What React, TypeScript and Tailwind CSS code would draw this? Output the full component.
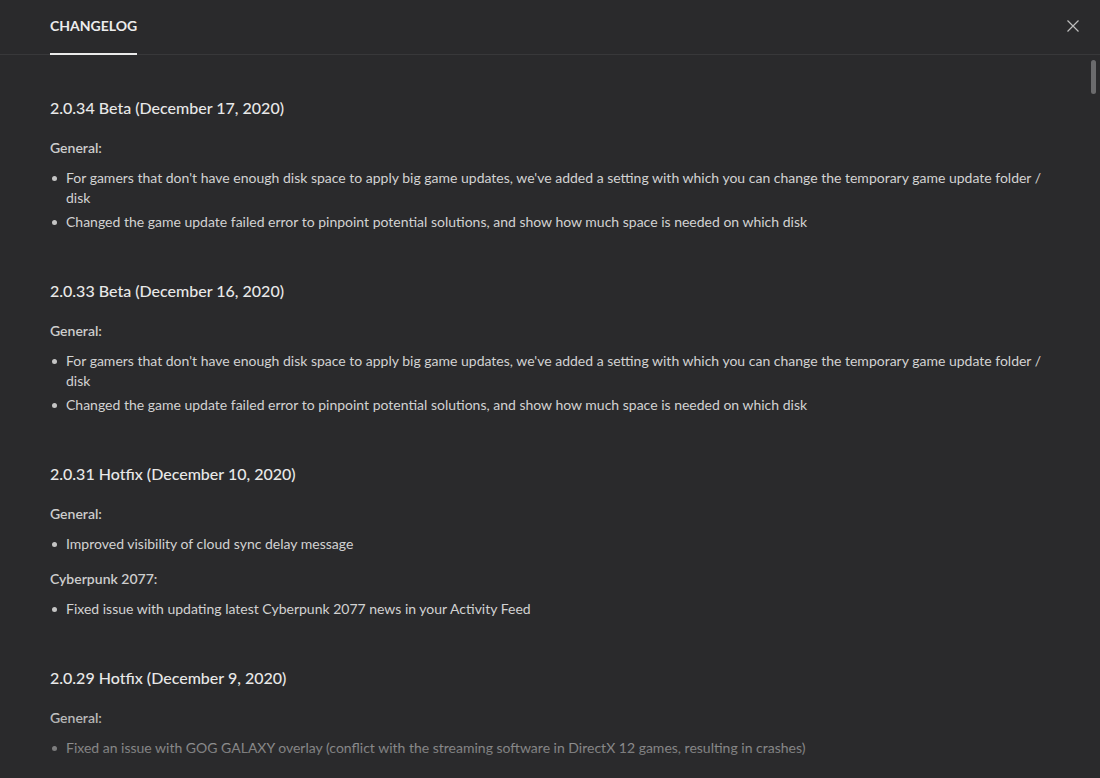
import React from 'react';

type Group = { title: string; items: string[] };
type Release = { version: string; groups: Group[] };

const RELEASES: Release[] = [
  {
    version: '2.0.34 Beta (December 17, 2020)',
    groups: [
      {
        title: 'General:',
        items: [
          "For gamers that don't have enough disk space to apply big game updates, we've added a setting with which you can change the temporary game update folder / disk",
          'Changed the game update failed error to pinpoint potential solutions, and show how much space is needed on which disk',
        ],
      },
    ],
  },
  {
    version: '2.0.33 Beta (December 16, 2020)',
    groups: [
      {
        title: 'General:',
        items: [
          "For gamers that don't have enough disk space to apply big game updates, we've added a setting with which you can change the temporary game update folder / disk",
          'Changed the game update failed error to pinpoint potential solutions, and show how much space is needed on which disk',
        ],
      },
    ],
  },
  {
    version: '2.0.31 Hotfix (December 10, 2020)',
    groups: [
      { title: 'General:', items: ['Improved visibility of cloud sync delay message'] },
      { title: 'Cyberpunk 2077:', items: ['Fixed issue with updating latest Cyberpunk 2077 news in your Activity Feed'] },
    ],
  },
  {
    version: '2.0.29 Hotfix (December 9, 2020)',
    groups: [
      {
        title: 'General:',
        items: [
          'Fixed an issue with GOG GALAXY overlay (conflict with the streaming software in DirectX 12 games, resulting in crashes)',
        ],
      },
    ],
  },
];

function ReleaseBlock({ release }: { release: Release }) {
  return (
    <section className="mb-[47px]">
      <h2 className="text-[16px] leading-6 font-medium text-[#e8e8e8]">{release.version}</h2>
      <div className="mt-[18px] flex flex-col gap-[15px]">
        {release.groups.map((g) => (
          <div key={g.title}>
            <div className="text-[14px] leading-5 font-semibold text-[#cdcdcd]">{g.title}</div>
            <ul className="mt-[10px] flex flex-col gap-1">
              {g.items.map((item, i) => (
                <li key={i} className="flex text-[14px] leading-5 text-[#d2d2d2]">
                  <span className="w-4 shrink-0 flex pt-[8px] pl-[2px]">
                    <span className="block w-[5px] h-[5px] rounded-full bg-[#c4c4c4]" />
                  </span>
                  <span>{item}</span>
                </li>
              ))}
            </ul>
          </div>
        ))}
      </div>
    </section>
  );
}

export default function App() {
  return (
    <div
      className="relative w-[1100px] h-[778px] overflow-hidden bg-[#2a2a2c] flex flex-col"
      style={{ fontFamily: 'Lato, "Noto Sans", sans-serif' }}
    >
      <header className="h-[55px] shrink-0 border-b border-[#38383a] flex items-end justify-between pl-[50px] pr-[20px]">
        <div className="flex flex-col items-start">
          <span className="text-[14px] font-bold text-[#ececec] leading-4 mb-[19px]">CHANGELOG</span>
          <span className="block h-[2px] w-[87px] bg-[#eaeaea] -mb-px" />
        </div>
        <button className="self-start mt-[19px] text-[#bdbdbd] bg-transparent border-0 p-0">
          <svg width="14" height="14" viewBox="0 0 14 14" fill="none" stroke="currentColor" strokeWidth="1.2">
            <path d="M1.5 1.5 L12.5 12.5 M12.5 1.5 L1.5 12.5" />
          </svg>
        </button>
      </header>

      <div className="flex-1 overflow-hidden pl-[50px] pr-[52px] pt-[41px]">
        {RELEASES.map((r) => (
          <ReleaseBlock key={r.version} release={r} />
        ))}
      </div>

      <div className="absolute right-[4px] top-[60px] w-[5px] h-[34px] rounded-full bg-[#6b6b6d]" />
      <div className="absolute left-0 right-0 bottom-0 h-[70px] bg-gradient-to-b from-[#2a2a2c]/0 to-[#2a2a2c]/80 pointer-events-none" />
    </div>
  );
}
